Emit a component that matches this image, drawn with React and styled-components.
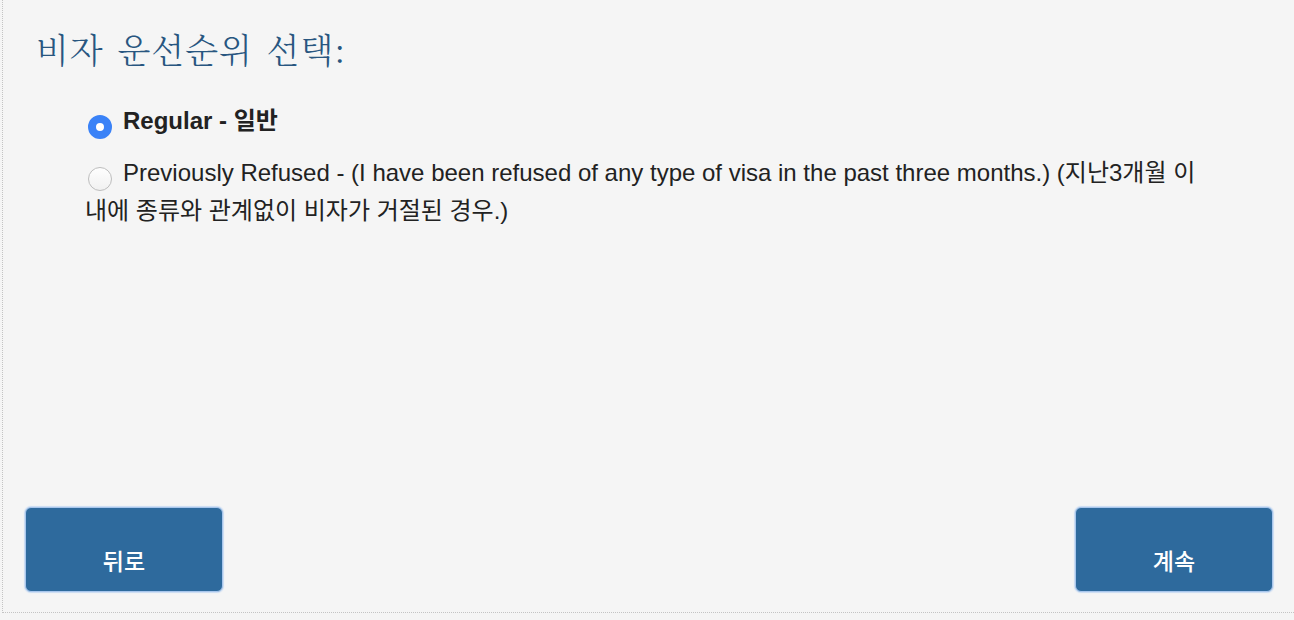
import React, { useState } from 'react';
import styled, { createGlobalStyle } from 'styled-components';

const GlobalStyle = createGlobalStyle`
  html, body {
    margin: 0;
    padding: 0;
    background: #f5f5f5;
  }
  body {
    font-family: "Liberation Sans", "Noto Sans CJK KR", Arial, sans-serif;
  }
`;

const Page = styled.div`
  display: flex;
  flex-direction: column;
  box-sizing: border-box;
  height: 613px;
  margin-left: 2px;
  border-left: 1px dotted #c4c4c4;
  border-bottom: 1px dotted #c4c4c4;
  padding: 0 21px 20px 22px;
`;

const Title = styled.h2`
  margin: 27px 0 0 11px;
  font-family: "Noto Serif CJK KR", "Noto Sans CJK KR", serif;
  font-weight: 300;
  font-size: 34px;
  letter-spacing: 1px;
  word-spacing: 4px;
  line-height: 44px;
  color: #285680;
`;

const Options = styled.div`
  display: flex;
  flex-direction: column;
  gap: 14px;
  margin: 31px 0 0 60px;
  max-width: 1125px;
`;

const Option = styled.label`
  display: block;
  font-size: 24px;
  line-height: 38px;
  color: #222;
  font-weight: ${p => (p.$bold ? 700 : 400)};
  cursor: pointer;
`;

const Radio = styled.span`
  display: inline-block;
  box-sizing: border-box;
  width: 24px;
  height: 24px;
  margin: 0 11px 0 3px;
  vertical-align: -10px;
  border-radius: 50%;
  background: ${p => (p.$checked ? '#fff' : 'linear-gradient(#fefefe, #f1f1f1)')};
  border: ${p => (p.$checked ? '8px solid #3a82f7' : '1px solid #bdbdbd')};
`;

const Footer = styled.div`
  display: flex;
  justify-content: space-between;
  margin-top: auto;
`;

const Button = styled.button`
  box-sizing: border-box;
  width: 198px;
  height: 85px;
  padding-top: 22px;
  border: 1px solid #a8c6ec;
  border-radius: 6px;
  box-shadow: 0 0 1px 1px #cadcf3;
  background: #2e6a9d;
  color: #fff;
  font-family: "Noto Sans CJK KR", sans-serif;
  font-weight: 500;
  font-size: 23px;
  cursor: pointer;
`;

const options = [
  { id: 'regular', label: 'Regular - 일반', bold: true },
  {
    id: 'refused',
    label:
      'Previously Refused - (I have been refused of any type of visa in the past three months.) (지난3개월 이내에 종류와 관계없이 비자가 거절된 경우.)',
  },
];

export default function App() {
  const [choice, setChoice] = useState('regular');
  return (
    <>
      <GlobalStyle />
      <Page>
        <Title>비자 운선순위 선택:</Title>
        <Options>
          {options.map(o => (
            <Option key={o.id} $bold={o.bold} onClick={() => setChoice(o.id)}>
              <Radio $checked={choice === o.id} />
              {o.label}
            </Option>
          ))}
        </Options>
        <Footer>
          <Button>뒤로</Button>
          <Button>계속</Button>
        </Footer>
      </Page>
    </>
  );
}
